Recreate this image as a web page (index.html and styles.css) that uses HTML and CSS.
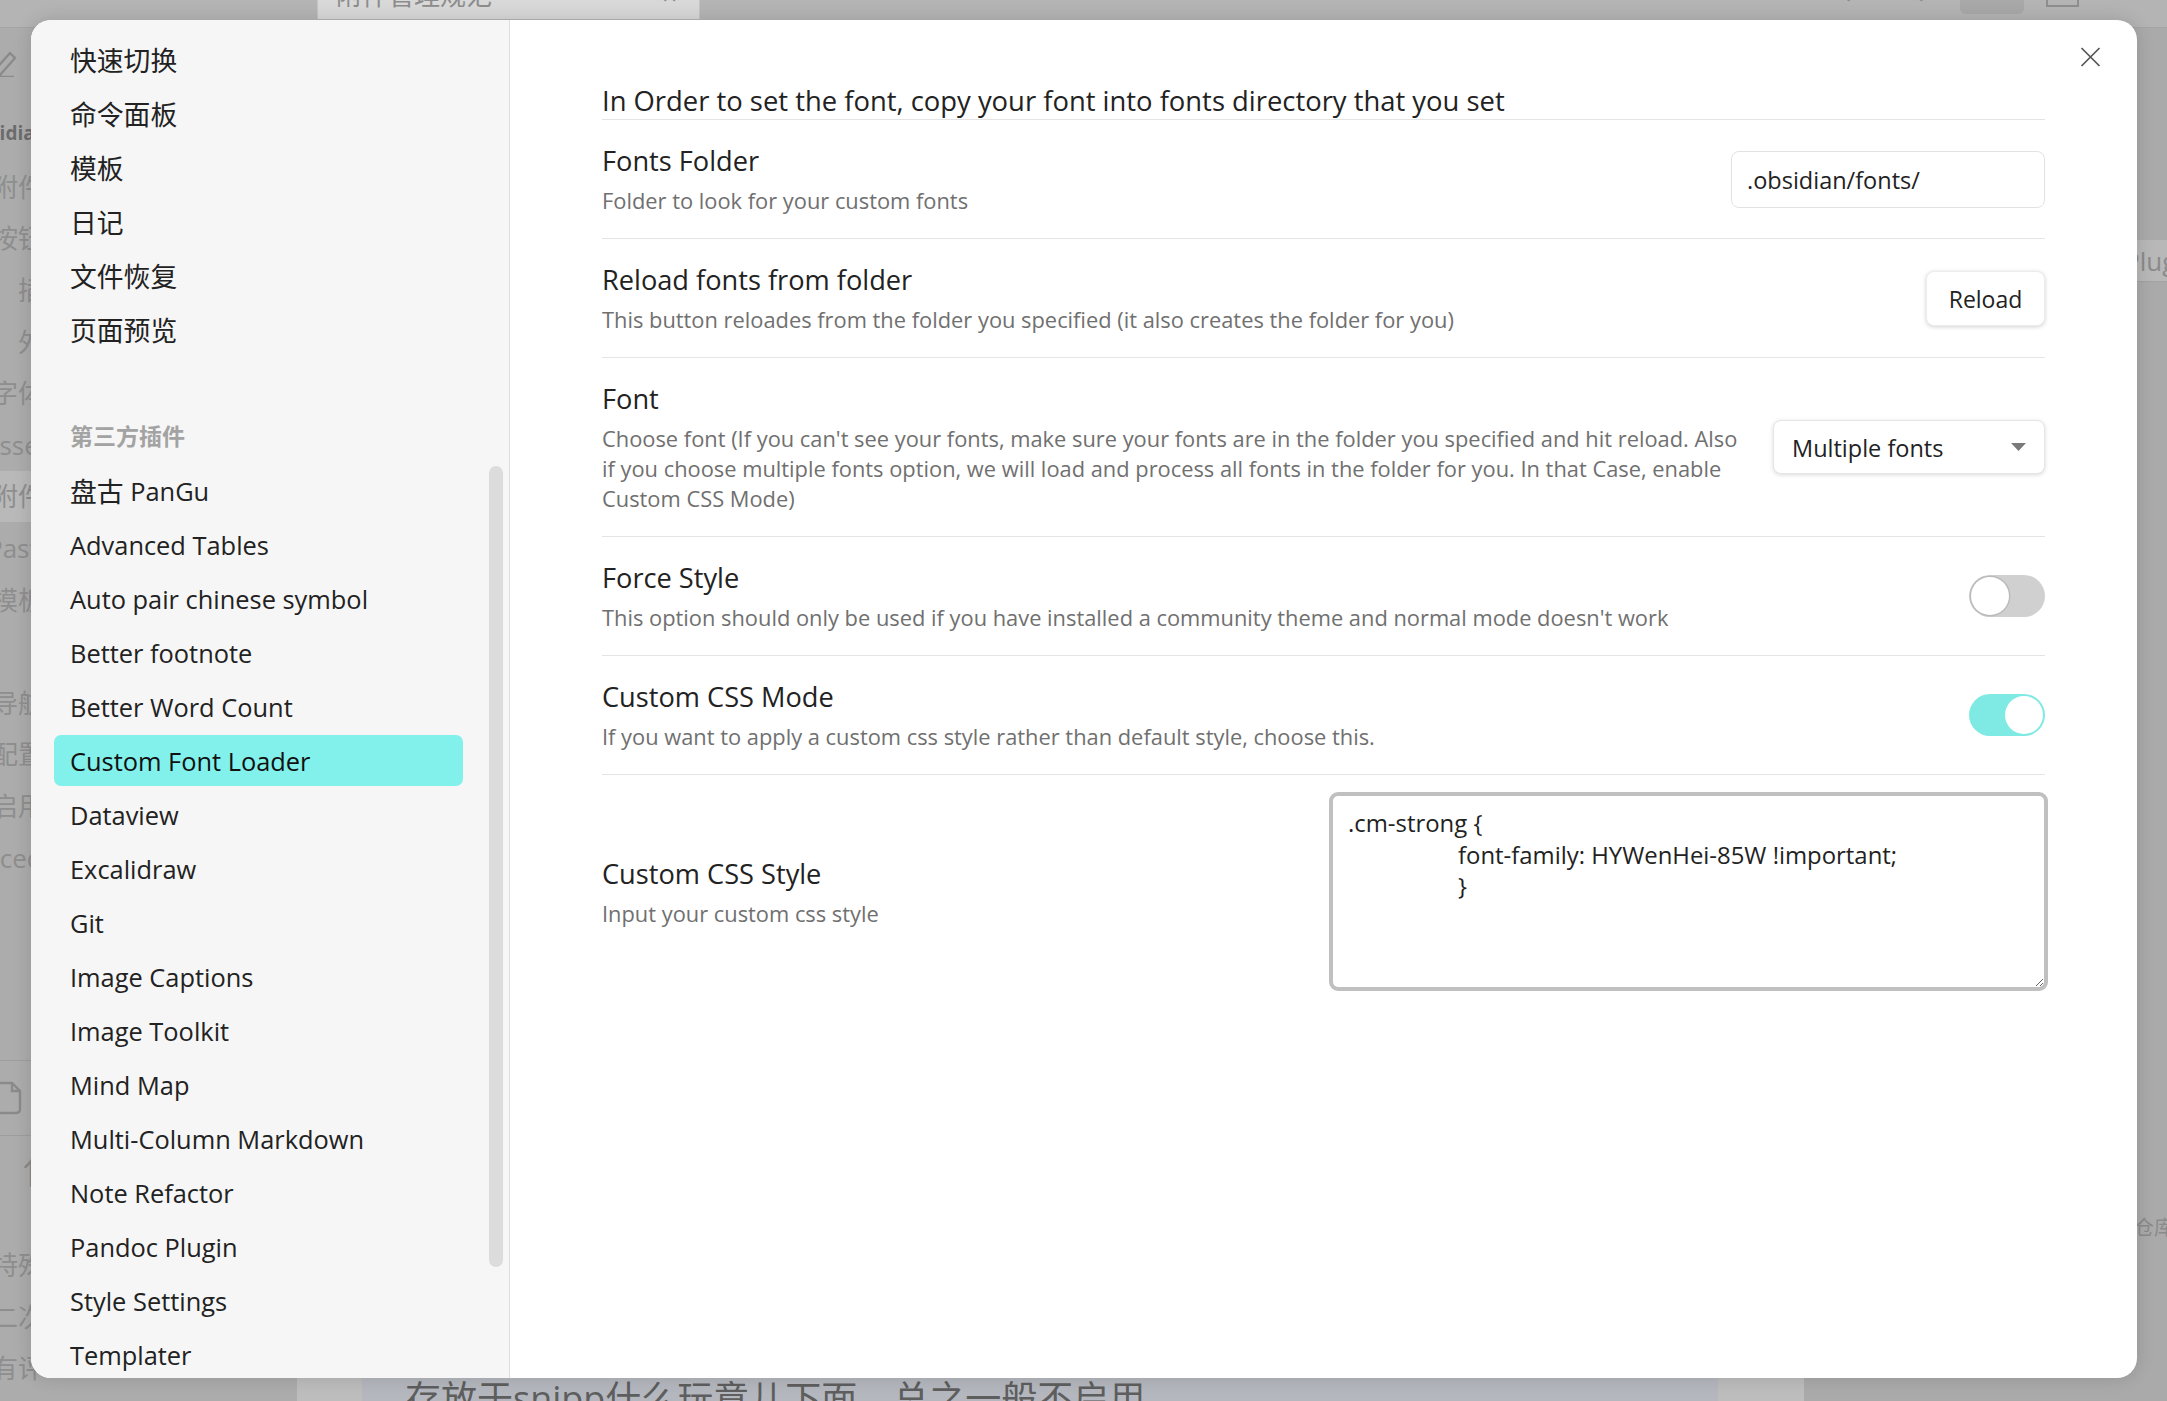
FILE: index.html
```html
<!DOCTYPE html>
<html lang="zh-CN">
<head>
<meta charset="utf-8">
<title>Custom Font Loader – 设置</title>
<link rel="stylesheet" href="styles.css">
</head>
<body>
<div class="app">
  <header class="titlebar">
    <div class="tb-gap"></div>
    <div class="tab">
      <span class="tab-title">附件管理规范</span>
      <span class="tab-close">×</span>
    </div>
    <div class="tb-fill"></div>
    <div class="tb-arrow">‹</div>
    <div class="tb-arrow tb-arrow-2">›</div>
    <div class="tb-box"></div>
    <div class="tb-win"></div>
  </header>
  <div class="workspace">
    <aside class="bg-left">
      <div class="bl-icons">
        <svg class="bl-pencil" width="20" height="30" viewBox="0 0 20 30"><path d="M-6 24 L10 6 L15 11 L0 28 L-6 28 Z M-4 30 H14" fill="none" stroke="#8a8a8a" stroke-width="2.4" stroke-linejoin="round"/></svg>
      </div>
      <div class="bl-vault">Obsidian</div>
      <div class="bl-row">附件</div>
      <div class="bl-row">按钮</div>
      <div class="bl-row bl-child">插件</div>
      <div class="bl-row bl-child">外观</div>
      <div class="bl-row">字体</div>
      <div class="bl-row bl-assets">Assets</div>
      <div class="bl-row bl-active">附件</div>
      <div class="bl-row bl-paste">Paste</div>
      <div class="bl-row">模板</div>
      <div class="bl-row"></div>
      <div class="bl-row">导航</div>
      <div class="bl-row">配置</div>
      <div class="bl-row">启用</div>
      <div class="bl-row bl-adv">Advanced</div>
      <div class="bl-spacer"></div>
      <div class="bl-file">
        <svg width="22" height="34" viewBox="0 0 22 34"><path d="M-4 2 H12 L20 10 V28 Q20 32 16 32 H-4" fill="none" stroke="#8a8a8a" stroke-width="2.4"/><path d="M12 2 V10 H20" fill="none" stroke="#8a8a8a" stroke-width="2.4"/></svg>
      </div>
      <div class="bl-up">↑</div>
      <div class="bl-row bl-low">特殊</div>
      <div class="bl-row">二次</div>
      <div class="bl-row">有评</div>
    </aside>
    <main class="bg-editor">
      <div class="bg-page">
        <p class="bg-line">存放于snipp什么玩意儿下面，总之一般不启用</p>
      </div>
    </main>
    <aside class="bg-right">
      <div class="br-tab">Plugins</div>
      <div class="br-note">仓库</div>
    </aside>
  </div>
</div>

<div class="modal-layer">
  <div class="modal">
    <nav class="sidebar">
      <div class="nav-item cjk">快速切换</div>
      <div class="nav-item cjk">命令面板</div>
      <div class="nav-item cjk">模板</div>
      <div class="nav-item cjk">日记</div>
      <div class="nav-item cjk">文件恢复</div>
      <div class="nav-item cjk">页面预览</div>
      <div class="nav-group-title">第三方插件</div>
      <div class="nav-item"><span class="cjk">盘古</span>&nbsp;PanGu</div>
      <div class="nav-item">Advanced Tables</div>
      <div class="nav-item">Auto pair chinese symbol</div>
      <div class="nav-item">Better footnote</div>
      <div class="nav-item">Better Word Count</div>
      <div class="nav-item is-active">Custom Font Loader</div>
      <div class="nav-item">Dataview</div>
      <div class="nav-item">Excalidraw</div>
      <div class="nav-item">Git</div>
      <div class="nav-item">Image Captions</div>
      <div class="nav-item">Image Toolkit</div>
      <div class="nav-item">Mind Map</div>
      <div class="nav-item">Multi-Column Markdown</div>
      <div class="nav-item">Note Refactor</div>
      <div class="nav-item">Pandoc Plugin</div>
      <div class="nav-item">Style Settings</div>
      <div class="nav-item">Templater</div>
      <div class="nav-item">Text Format</div>
      <div class="scroll-thumb"></div>
    </nav>

    <section class="pane">
      <h3 class="pane-heading">In Order to set the font, copy your font into fonts directory that you set</h3>

      <div class="setting">
        <div class="setting-info">
          <div class="setting-name">Fonts Folder</div>
          <div class="setting-desc">Folder to look for your custom fonts</div>
        </div>
        <div class="setting-control">
          <input class="text-input" type="text" value=".obsidian/fonts/" spellcheck="false">
        </div>
      </div>

      <div class="setting">
        <div class="setting-info">
          <div class="setting-name">Reload fonts from folder</div>
          <div class="setting-desc">This button reloades from the folder you specified (it also creates the folder for you)</div>
        </div>
        <div class="setting-control">
          <button class="btn">Reload</button>
        </div>
      </div>

      <div class="setting">
        <div class="setting-info">
          <div class="setting-name">Font</div>
          <div class="setting-desc">Choose font (If you can't see your fonts, make sure your fonts are in the folder you specified and hit reload. Also if you choose multiple fonts option, we will load and process all fonts in the folder for you. In that Case, enable Custom CSS Mode)</div>
        </div>
        <div class="setting-control">
          <div class="dropdown-wrap">
            <select class="dropdown"><option>Multiple fonts</option></select>
            <svg class="dropdown-arrow" width="15" height="8" viewBox="0 0 15 8"><path d="M0 0 H15 L7.5 8 Z" fill="#7a7a7a"/></svg>
          </div>
        </div>
      </div>

      <div class="setting">
        <div class="setting-info">
          <div class="setting-name">Force Style</div>
          <div class="setting-desc">This option should only be used if you have installed a community theme and normal mode doesn't work</div>
        </div>
        <div class="setting-control">
          <div class="toggle"><div class="knob"></div></div>
        </div>
      </div>

      <div class="setting">
        <div class="setting-info">
          <div class="setting-name">Custom CSS Mode</div>
          <div class="setting-desc">If you want to apply a custom css style rather than default style, choose this.</div>
        </div>
        <div class="setting-control">
          <div class="toggle is-on"><div class="knob"></div></div>
        </div>
      </div>

      <div class="setting setting-css">
        <div class="setting-info">
          <div class="setting-name">Custom CSS Style</div>
          <div class="setting-desc">Input your custom css style</div>
        </div>
        <div class="setting-control">
          <textarea class="css-input" spellcheck="false">.cm-strong {
	font-family: HYWenHei-85W !important;
	}</textarea>
        </div>
      </div>
    </section>

    <button class="modal-close" aria-label="Close">
      <svg width="21" height="20" viewBox="0 0 21 20"><path d="M1.5 1 L19.5 19 M19.5 1 L1.5 19" stroke="#555" stroke-width="1.7" fill="none"/></svg>
    </button>
  </div>
</div>
</body>
</html>
```

FILE: styles.css
```css
* { box-sizing: border-box; }

html, body {
  margin: 0;
  padding: 0;
  width: 2167px;
  height: 1401px;
  overflow: hidden;
}

body {
  position: relative;
  font-family: "Open Sans", "Noto Sans CJK SC", sans-serif;
  background: #acacac;
  color: #222;
}

/* ---------- dimmed app behind the modal ---------- */
.app {
  width: 2167px;
  height: 1401px;
  display: flex;
  flex-direction: column;
}

.titlebar {
  height: 28px;
  flex: none;
  display: flex;
  align-items: flex-start;
  background: #b4b4b4;
  border-bottom: 1px solid #a4a4a4;
  overflow: hidden;
}
.tb-gap { width: 317px; flex: none; }
.tab {
  width: 383px;
  height: 19px;
  flex: none;
  display: flex;
  justify-content: space-between;
  padding: 0 22px 0 18px;
  background: #d8d8d8;
  border-left: 1px solid #c4c4c4;
  border-right: 1px solid #c4c4c4;
  overflow: hidden;
}
.tab-title,
.tab-close {
  font-size: 26px;
  line-height: 26px;
  margin-top: -18px;
  color: #8c8c8c;
}
.tb-fill { flex: 1; }
.tb-arrow {
  width: 14px;
  font-size: 26px;
  line-height: 26px;
  margin-top: -20px;
  color: #8a8a8a;
}
.tb-arrow-2 { margin-left: 62px; }
.tb-box {
  width: 64px;
  height: 14px;
  margin-left: 27px;
  background: #a8a8a8;
  border-radius: 0 0 6px 6px;
}
.tb-win {
  width: 33px;
  height: 7px;
  margin: 0 88px 0 22px;
  border: 2px solid #8e8e8e;
  border-top: none;
}

.workspace {
  flex: 1;
  display: flex;
  min-height: 0;
}

.bg-left {
  width: 297px;
  flex: none;
  background: #acacac;
  overflow: hidden;
  font-size: 26px;
  line-height: 34px;
  color: #8e8e8e;
  white-space: nowrap;
}
.bl-icons {
  height: 68px;
  display: flex;
  align-items: center;
}
.bl-vault {
  height: 65px;
  padding-top: 9px;
  display: flex;
  align-items: center;
  margin-left: -37px;
  font-size: 19px;
  font-weight: 700;
  color: #6c6c6c;
}
.bl-row {
  height: 51.6px;
  display: flex;
  align-items: center;
  margin-left: -8px;
}
.bl-child { margin-left: 18px; }
.bl-assets { margin-left: -17px; }
.bl-paste { margin-left: -13px; }
.bl-adv { margin-left: -76px; }
.bl-active { background: #b9b9b9; margin-left: 0; text-indent: -8px; }
.bl-spacer {
  height: 178px;
  border-bottom: 1px solid #9e9e9e;
}
.bl-file {
  height: 75px;
  display: flex;
  align-items: center;
  border-bottom: 1px solid #9e9e9e;
}
.bl-up {
  height: 73px;
  display: flex;
  align-items: center;
  padding-left: 16px;
  font-size: 30px;
  color: #888;
}
.bl-low { margin-top: 30px; }

.bg-editor {
  width: 1507px;
  flex: none;
  background: #bdbdbd;
  padding: 0 86px 0 65px;
}
.bg-page {
  height: 100%;
  background: #b4b8be;
  padding: 1347px 0 0 43px;
  overflow: hidden;
}
.bg-line {
  margin: 0;
  font-size: 36px;
  line-height: 48px;
  color: #5e5e5e;
  white-space: nowrap;
}

.bg-right {
  flex: 1;
  background: #aaaaaa;
  overflow: hidden;
  white-space: nowrap;
  font-size: 26px;
  color: #8a8a8a;
}
.br-tab {
  margin-top: 212px;
  height: 42px;
  line-height: 42px;
  padding-left: 320px;
  background: #b8b8b8;
  border-bottom: 1px solid #a2a2a2;
}
.br-note {
  margin-top: 930px;
  padding-left: 330px;
  font-size: 20px;
}

/* ---------- modal ---------- */
.modal-layer {
  position: absolute;
  inset: 0;
}

.modal {
  position: absolute;
  left: 31px;
  top: 20px;
  width: 2106px;
  height: 1358px;
  display: flex;
  background: #fff;
  border-radius: 20px;
  overflow: hidden;
  box-shadow: 0 0 18px rgba(0, 0, 0, 0.14);
}

.modal-close {
  position: absolute;
  left: 2049px;
  top: 27px;
  width: 21px;
  height: 20px;
  padding: 0;
  border: 0;
  background: none;
  display: block;
}
.modal-close svg { display: block; }

/* sidebar */
.sidebar {
  position: relative;
  width: 479px;
  flex: none;
  background: #f6f6f6;
  border-right: 1px solid #dedede;
  padding: 14px 0 0 23px;
  overflow: hidden;
}
.nav-item {
  width: 409px;
  height: 51px;
  margin-bottom: 3.05px;
  padding-left: 16px;
  display: flex;
  align-items: center;
  border-radius: 7px;
  font-size: 25.4px;
  color: #222;
  white-space: nowrap;
}
.cjk { font-size: 26.8px; }
.nav-item.is-active {
  background: #82f1ec;
  color: #111;
}
.nav-group-title {
  height: 40px;
  margin: 60px 0 10px;
  padding-left: 16px;
  display: flex;
  align-items: center;
  font-size: 23px;
  font-weight: 600;
  color: #a3a3a3;
}
.scroll-thumb {
  position: absolute;
  left: 458px;
  top: 446px;
  width: 14px;
  height: 801px;
  border-radius: 7px;
  background: #dcdcdc;
}

/* settings pane */
.pane {
  flex: 1;
  min-width: 0;
  padding: 62px 92px 0 92px;
}
.pane-heading {
  margin: 0;
  font-size: 27.4px;
  font-weight: 400;
  line-height: 37px;
  color: #222;
  border-bottom: 1px solid #e4e4e4;
}

.setting {
  display: flex;
  align-items: center;
  padding: 22px 0;
  border-top: 1px solid #e4e4e4;
}
.pane-heading + .setting { border-top: none; }

.setting-info {
  flex: 1 1 auto;
  min-width: 0;
  margin-right: 28px;
}
.setting-name {
  font-size: 27.2px;
  line-height: 38px;
  color: #222;
}
.setting-desc {
  margin-top: 6px;
  font-size: 21.85px;
  line-height: 30px;
  color: #707070;
}
.setting-control {
  flex: none;
  display: flex;
  align-items: center;
}

.text-input {
  width: 314px;
  height: 57px;
  padding: 2px 15px 0;
  border: 1px solid #e2e2e2;
  border-radius: 8px;
  background: #fff;
  font-family: inherit;
  font-size: 23.5px;
  color: #222;
  outline: none;
}

.btn {
  width: 119px;
  height: 55px;
  padding: 2px 0 0;
  border: 1px solid #ececec;
  border-radius: 8px;
  background: #fff;
  box-shadow: 0 1px 4px rgba(0, 0, 0, 0.18);
  font-family: inherit;
  font-size: 23px;
  color: #222;
}

.dropdown-wrap {
  position: relative;
  width: 272px;
  height: 54px;
}
.dropdown {
  width: 100%;
  height: 100%;
  -webkit-appearance: none;
  appearance: none;
  padding: 2px 40px 0 18px;
  border: 1px solid #e6e6e6;
  border-radius: 8px;
  background: #fff;
  box-shadow: 0 1px 4px rgba(0, 0, 0, 0.15);
  font-family: inherit;
  font-size: 23.5px;
  color: #222;
  outline: none;
}
.dropdown-arrow {
  position: absolute;
  right: 19px;
  top: 23px;
  pointer-events: none;
}

.toggle {
  width: 76px;
  height: 42px;
  padding: 2px;
  display: flex;
  justify-content: flex-start;
  border-radius: 21px;
  background: #d0d0d0;
}
.toggle .knob {
  width: 38px;
  height: 38px;
  border-radius: 50%;
  background: #fff;
  box-shadow: 0 0 0 1.5px rgba(0, 0, 0, 0.1);
}
.toggle.is-on {
  justify-content: flex-end;
  background: #7fe9e3;
}
.toggle.is-on .knob { box-shadow: none; }

.setting-css {
  padding-top: 17px;
  align-items: center;
}
.css-input {
  display: block;
  width: 719px;
  height: 199px;
  margin-right: -3px;
  padding: 11px 15px 7px;
  border: 4px solid #c0c0c0;
  border-radius: 9px;
  background: #fff;
  font-family: inherit;
  font-size: 23.9px;
  line-height: 31.5px;
  color: #222;
  tab-size: 110px;
  -moz-tab-size: 110px;
  resize: both;
  outline: none;
}
```
